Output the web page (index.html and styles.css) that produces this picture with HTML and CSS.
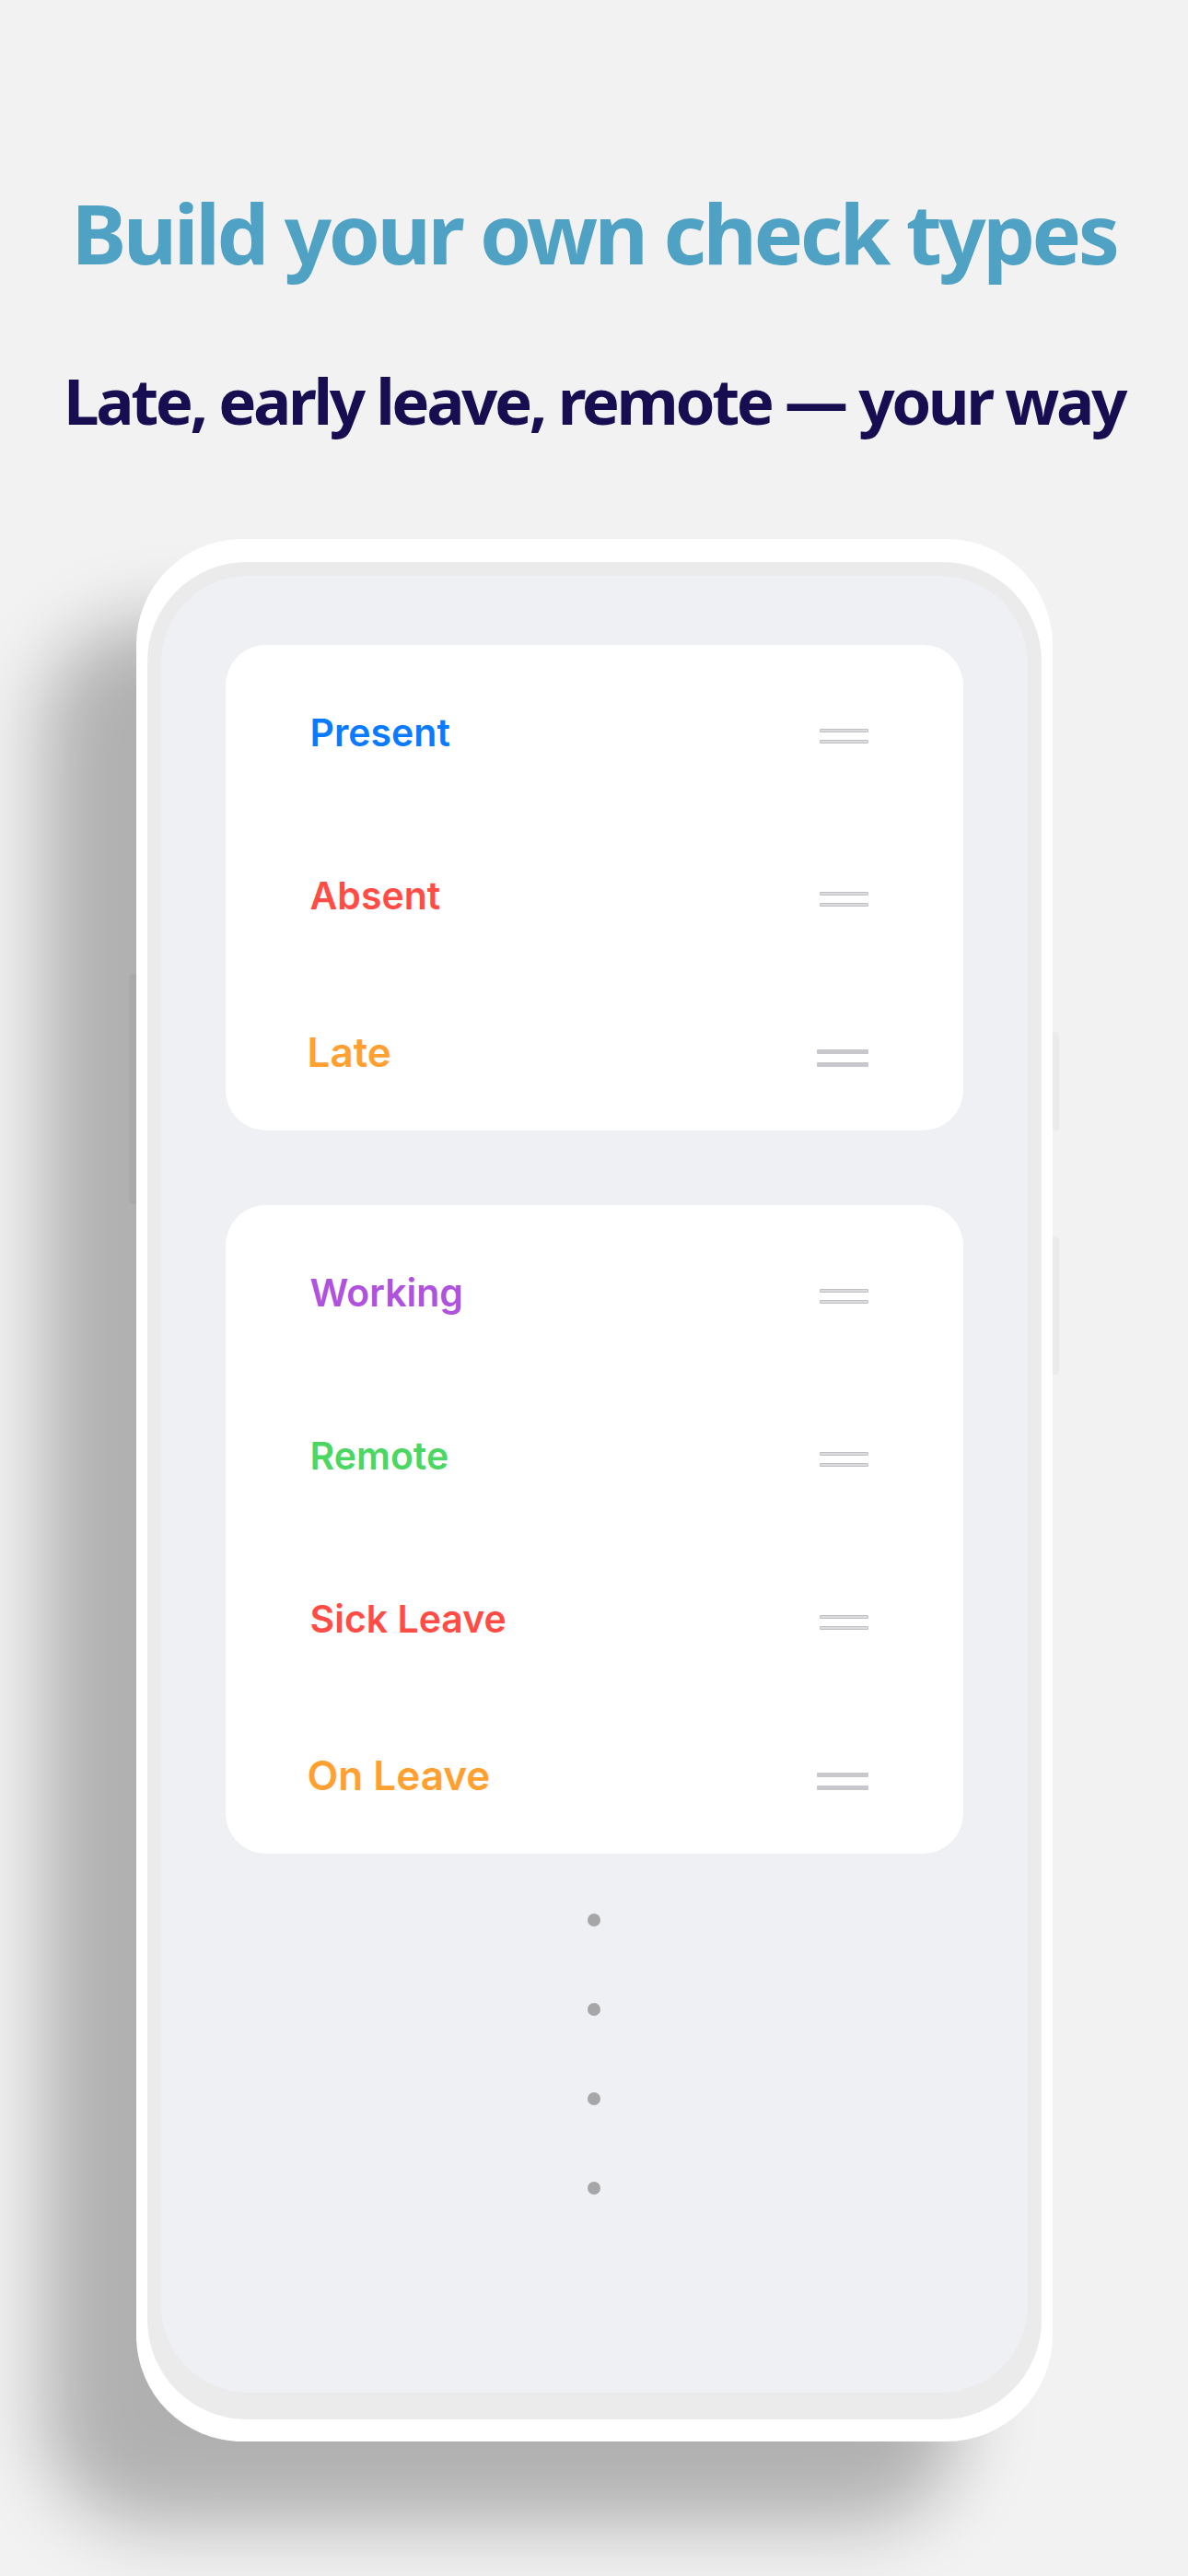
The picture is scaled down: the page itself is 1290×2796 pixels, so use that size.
FILE: index.html
```html
<!DOCTYPE html>
<html lang="en">
<head>
<meta charset="utf-8">
<title>Build your own check types</title>
<link rel="stylesheet" href="styles.css">
</head>
<body>
<div class="page">
  <header class="header">
    <h1 class="title">Build your own check types</h1>
    <p class="subtitle">Late, early leave, remote — your way</p>
  </header>

  <div class="phone">
    <span class="btn btn-left"></span>
    <span class="btn btn-right-1"></span>
    <span class="btn btn-right-2"></span>
    <div class="bezel">
      <div class="screen">
        <div class="card">
          <div class="row">
            <span class="label c-blue">Present</span>
            <span class="handle"><i></i><i></i></span>
          </div>
          <div class="row">
            <span class="label c-red">Absent</span>
            <span class="handle"><i></i><i></i></span>
          </div>
          <div class="row row-last">
            <span class="label c-orange">Late</span>
            <span class="handle"><i></i><i></i></span>
          </div>
        </div>

        <div class="card card-2">
          <div class="row">
            <span class="label c-purple">Working</span>
            <span class="handle"><i></i><i></i></span>
          </div>
          <div class="row">
            <span class="label c-green">Remote</span>
            <span class="handle"><i></i><i></i></span>
          </div>
          <div class="row">
            <span class="label c-red">Sick Leave</span>
            <span class="handle"><i></i><i></i></span>
          </div>
          <div class="row row-last">
            <span class="label c-orange">On Leave</span>
            <span class="handle"><i></i><i></i></span>
          </div>
        </div>

        <div class="dots">
          <span class="dot"></span>
          <span class="dot"></span>
          <span class="dot"></span>
          <span class="dot"></span>
        </div>
      </div>
    </div>
  </div>
</div>
</body>
</html>
```

FILE: styles.css
```css
html, body {
  margin: 0;
  padding: 0;
}

body {
  background: #f2f2f2;
  width: 1290px;
  height: 2796px;
  overflow: hidden;
}

.page {
  width: 1290px;
  height: 2796px;
  padding-top: 202px;
  box-sizing: border-box;
}

.header {
  text-align: center;
  font-family: "Noto Sans", "Open Sans", sans-serif;
  font-weight: 700;
}

.title {
  margin: 0;
  font-size: 90px;
  line-height: 100px;
  font-weight: 700;
  color: #4fa2c4;
  letter-spacing: -3.5px;
}

.subtitle {
  margin: 92px 0 0;
  font-size: 69px;
  line-height: 80px;
  color: #170e52;
  letter-spacing: -3.4px;
}

.phone {
  position: relative;
  width: 995px;
  height: 2065px;
  margin: 111px auto 0;
  box-sizing: border-box;
  background: #ffffff;
  border-radius: 115px;
  padding: 25px 12px 24px 12px;
  box-shadow: -100px 90px 80px rgba(0, 0, 0, 0.27);
}

.btn {
  position: absolute;
  display: block;
}

.btn-left {
  left: -8px;
  top: 472px;
  width: 8px;
  height: 250px;
  border-radius: 4px 0 0 4px;
  background: rgba(0, 0, 0, 0.04);
}

.btn-right-1,
.btn-right-2 {
  right: -7px;
  width: 7px;
  border-radius: 0 4px 4px 0;
  background: #ebebeb;
}

.btn-right-1 {
  top: 535px;
  height: 107px;
}

.btn-right-2 {
  top: 757px;
  height: 150px;
}

.bezel {
  height: 100%;
  box-sizing: border-box;
  background: #ebebeb;
  border-radius: 108px;
  padding: 15px 15px 29px 15px;
}

.screen {
  height: 100%;
  box-sizing: border-box;
  background: #eff0f4;
  border-radius: 95px;
  padding: 75px 70px 0;
  display: flex;
  flex-direction: column;
}

.card {
  background: #ffffff;
  border-radius: 44px;
  display: flex;
  flex-direction: column;
}

.card-2 {
  margin-top: 81px;
}

.row {
  height: 177px;
  box-sizing: border-box;
  padding: 70px 103px 0 92px;
  display: flex;
  justify-content: space-between;
  align-items: flex-start;
}

.label {
  font-family: "Inter", "Roboto", sans-serif;
  font-weight: 600;
  font-size: 41px;
  line-height: 50px;
}

.handle {
  margin-top: 21px;
  width: 53px;
  display: flex;
  flex-direction: column;
  gap: 8px;
}

.handle i {
  display: block;
  height: 4px;
  box-sizing: border-box;
  background: #dcdcdf;
  border: 1px solid #bfbfc4;
  border-radius: 1px;
}

.row-last {
  height: 173px;
  padding: 61px 103px 0 89px;
}

.row-last .label {
  font-size: 44px;
  line-height: 54px;
}

.row-last .handle {
  margin-top: 24px;
  width: 56px;
  gap: 9px;
}

.row-last .handle i {
  height: 5px;
  background: #c7c7cc;
  border: none;
}

.c-blue { color: #0a7aff; }
.c-red { color: #ff4d46; }
.c-orange { color: #ffa031; }
.c-purple { color: #af52de; }
.c-green { color: #4cd763; }

.dots {
  margin-top: 65px;
  display: flex;
  flex-direction: column;
  align-items: center;
  gap: 83px;
}

.dot {
  width: 14px;
  height: 14px;
  border-radius: 50%;
  background: #a6a6a9;
}
```
